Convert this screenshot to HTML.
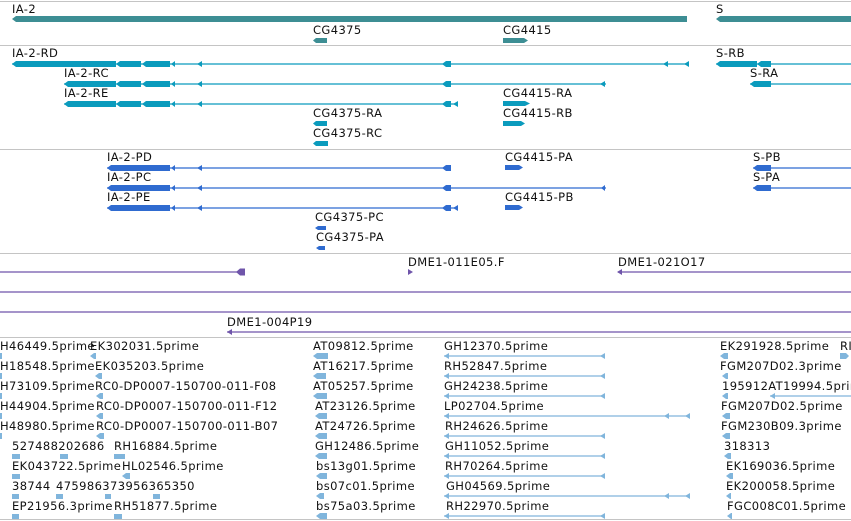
<!DOCTYPE html>
<html><head><meta charset="utf-8"><style>
html,body{margin:0;padding:0;background:#fff;width:851px;height:521px;overflow:hidden}
svg text{font-family:"DejaVu Sans","Liberation Sans",sans-serif;font-size:11.5px;fill:#111;letter-spacing:0.4px}
</style></head><body>
<svg width="851" height="521" xmlns="http://www.w3.org/2000/svg">
<g stroke="#c4c4c4" stroke-width="1">
<line x1="0" y1="1.5" x2="851" y2="1.5"/><line x1="0" y1="45.5" x2="851" y2="45.5"/>
<line x1="0" y1="149.5" x2="851" y2="149.5"/><line x1="0" y1="253.5" x2="851" y2="253.5"/>
<line x1="0" y1="337.5" x2="851" y2="337.5"/><line x1="0" y1="519.5" x2="851" y2="519.5"/>
</g>

<!-- track 1 genes -->
<g fill="#3d8e94">
<path d="M12 19 L16 16 L687 16 L687 22 L16 22 Z"/>
<path d="M716 19 L720 16 L851 16 L851 22 L720 22 Z"/>
<path d="M313 40.5 L316 38 L327 38 L327 43 L316 43 Z"/>
<path d="M503 38 L524 38 L528 40.5 L524 43 L503 43 Z"/>
</g>
<text x="12" y="13">IA-2</text><text x="716" y="13">S</text>
<text x="313" y="34">CG4375</text><text x="503" y="34">CG4415</text>

<!-- track 2 transcripts (cyan) -->
<g stroke="#0b9bbd" stroke-width="1.3"><line x1="12" y1="64" x2="688" y2="64"/><line x1="64" y1="84" x2="606" y2="84"/><line x1="64" y1="104" x2="458" y2="104"/><line x1="716" y1="64" x2="851" y2="64"/><line x1="750" y1="84" x2="851" y2="84"/></g>
<g fill="#0b9bbd">
<path d="M12 64 L16 61 L116 61 L116 67 L16 67 Z"/><path d="M116 64 L120 61 L141 61 L141 67 L120 67 Z"/><path d="M142 64 L146 61 L170 61 L170 67 L146 67 Z"/><path d="M171 64 L175 61 L175 67Z"/><path d="M197 64 L202 61 L202 67Z"/><path d="M442 64 L446 61 L451 61 L451 67 L446 67Z"/><path d="M663 64 L668 61 L668 67Z"/><path d="M684 64 L689 61 L689 67Z"/>
<path d="M64 84 L68 81 L116 81 L116 87 L68 87 Z"/><path d="M116 84 L120 81 L141 81 L141 87 L120 87 Z"/><path d="M142 84 L146 81 L170 81 L170 87 L146 87 Z"/><path d="M171 84 L175 81 L175 87Z"/><path d="M197 84 L202 81 L202 87Z"/><path d="M442 84 L446 81 L451 81 L451 87 L446 87Z"/><path d="M600 84 L605 81 L605 87Z"/>
<path d="M64 104 L68 101 L116 101 L116 107 L68 107 Z"/><path d="M116 104 L120 101 L141 101 L141 107 L120 107 Z"/><path d="M142 104 L146 101 L170 101 L170 107 L146 107 Z"/><path d="M171 104 L175 101 L175 107Z"/><path d="M197 104 L202 101 L202 107Z"/><path d="M442 104 L446 101 L451 101 L451 107 L446 107Z"/><path d="M453 104 L458 101 L458 107Z"/>
<path d="M716 64 L720 61 L757 61 L757 67 L720 67Z"/><path d="M757 64 L761 61 L771 61 L771 67 L761 67Z"/>
<path d="M750 84 L754 81 L771 81 L771 87 L754 87Z"/>
<path d="M503 101 L525 101 L530 103.5 L525 106 L503 106Z"/>
<path d="M503 121 L521 121 L525 123.5 L521 126 L503 126Z"/>
<path d="M313 123.5 L316 121 L327 121 L327 126 L316 126Z"/>
<path d="M313 143.5 L316 141 L328 141 L328 146 L316 146Z"/>
</g>
<text x="12" y="57">IA-2-RD</text><text x="64" y="77">IA-2-RC</text><text x="64" y="97">IA-2-RE</text>
<text x="716" y="57">S-RB</text><text x="750" y="77">S-RA</text>
<text x="503" y="97">CG4415-RA</text><text x="503" y="117">CG4415-RB</text>
<text x="313" y="117">CG4375-RA</text><text x="313" y="137">CG4375-RC</text>

<!-- track 3 (blue) -->
<g stroke="#2f6bd0" stroke-width="1.3"><line x1="107" y1="168" x2="451" y2="168"/><line x1="107" y1="188" x2="606" y2="188"/><line x1="107" y1="208" x2="458" y2="208"/><line x1="753" y1="168" x2="851" y2="168"/><line x1="753" y1="188" x2="851" y2="188"/></g>
<g fill="#2f6bd0">
<path d="M107 168 L111 165 L170 165 L170 171 L111 171Z"/><path d="M171 168 L175 165 L175 171Z"/><path d="M197 168 L202 165 L202 171Z"/><path d="M442 168 L446 165 L451 165 L451 171 L446 171Z"/>
<path d="M107 188 L111 185 L170 185 L170 191 L111 191Z"/><path d="M171 188 L175 185 L175 191Z"/><path d="M197 188 L202 185 L202 191Z"/><path d="M442 188 L446 185 L451 185 L451 191 L446 191Z"/><path d="M601 188 L605 185 L605 191Z"/>
<path d="M107 208 L111 205 L170 205 L170 211 L111 211Z"/><path d="M171 208 L175 205 L175 211Z"/><path d="M197 208 L202 205 L202 211Z"/><path d="M442 208 L446 205 L451 205 L451 211 L446 211Z"/><path d="M453 208 L458 205 L458 211Z"/>
<path d="M753 168 L757 165 L771 165 L771 171 L757 171Z"/><path d="M753 188 L757 185 L771 185 L771 191 L757 191Z"/>
<path d="M505 165 L519 165 L523 167.5 L519 170 L505 170Z"/><path d="M505 205 L519 205 L523 207.5 L519 210 L505 210Z"/>
<path d="M315 228 L318 226 L326 226 L326 230 L318 230Z"/><path d="M316 248 L319 246 L325 246 L325 250 L319 250Z"/>
</g>
<text x="107" y="161">IA-2-PD</text><text x="107" y="181">IA-2-PC</text><text x="107" y="201">IA-2-PE</text>
<text x="505" y="161">CG4415-PA</text><text x="505" y="201">CG4415-PB</text>
<text x="315" y="221">CG4375-PC</text><text x="316" y="241">CG4375-PA</text>
<text x="753" y="161">S-PB</text><text x="753" y="181">S-PA</text>

<!-- track 4 purple -->
<g stroke="#6f55aa" stroke-width="1.3"><line x1="0" y1="272" x2="245" y2="272"/><line x1="618" y1="272" x2="851" y2="272"/><line x1="0" y1="292" x2="851" y2="292"/><line x1="0" y1="312" x2="851" y2="312"/><line x1="227" y1="332" x2="851" y2="332"/></g>
<g fill="#6f55aa"><path d="M236 272 L240 268.5 L245 268.5 L245 275.5 L240 275.5Z"/><path d="M408 269 L413 272 L408 275Z"/><path d="M617 272 L622 269 L622 275Z"/><path d="M227 332 L232 329 L232 335Z"/></g>
<text x="408" y="266">DME1-011E05.F</text><text x="618" y="266">DME1-021O17</text><text x="227" y="326">DME1-004P19</text>

<!-- track 5 ESTs -->
<g stroke="#80b5dc" stroke-width="1.3">
<line x1="444" y1="356" x2="605" y2="356"/><line x1="444" y1="376" x2="605" y2="376"/><line x1="444" y1="396" x2="605" y2="396"/><line x1="444" y1="416" x2="690" y2="416"/><line x1="444" y1="436" x2="605" y2="436"/><line x1="444" y1="456" x2="605" y2="456"/><line x1="444" y1="476" x2="605" y2="476"/><line x1="444" y1="496" x2="690" y2="496"/><line x1="444" y1="516" x2="605" y2="516"/>
<line x1="770" y1="396" x2="851" y2="396"/>
</g>
<g fill="#80b5dc">
<path d="M600 356 L605 353 L605 359Z"/><path d="M600 376 L605 373 L605 379Z"/><path d="M600 396 L605 393 L605 399Z"/><path d="M664 416 L669 413 L669 419Z"/><path d="M685 416 L690 413 L690 419Z"/><path d="M600 436 L605 433 L605 439Z"/><path d="M600 456 L605 453 L605 459Z"/><path d="M600 476 L605 473 L605 479Z"/><path d="M664 496 L669 493 L669 499Z"/><path d="M685 496 L690 493 L690 499Z"/><path d="M600 516 L605 513 L605 519Z"/>
<path d="M444 356 L449 353 L449 359Z"/><path d="M444 376 L449 373 L449 379Z"/><path d="M444 396 L449 393 L449 399Z"/><path d="M444 416 L449 413 L449 419Z"/><path d="M444 436 L449 433 L449 439Z"/><path d="M444 456 L449 453 L449 459Z"/><path d="M444 476 L449 473 L449 479Z"/><path d="M444 496 L449 493 L449 499Z"/><path d="M444 516 L449 513 L449 519Z"/>
<rect x="0" y="353" width="2" height="6"/><rect x="0" y="373" width="2" height="6"/><rect x="0" y="393" width="2" height="6"/><rect x="0" y="413" width="2" height="6"/><rect x="0" y="433" width="2" height="6"/>
<path d="M90 356 L94 353 L96 353 L96 359 L94 359Z"/><path d="M95 376 L99 373 L102 373 L102 379 L99 379Z"/><path d="M96 396 L100 393 L103 393 L103 399 L100 399Z"/><path d="M96 416 L100 413 L103 413 L103 419 L100 419Z"/><path d="M96 436 L100 433 L104 433 L104 439 L100 439Z"/>
<rect x="12" y="454" width="8" height="5"/><rect x="60" y="454" width="8" height="5"/><rect x="114" y="454" width="11" height="5"/>
<rect x="12" y="474" width="8" height="5"/><path d="M122 476 L126 473 L130 473 L130 479 L126 479Z"/>
<rect x="12" y="494" width="7" height="5"/><rect x="56" y="494" width="7" height="5"/><rect x="105" y="494" width="6" height="5"/><rect x="153" y="494" width="7" height="5"/>
<rect x="12" y="514" width="7" height="5"/><rect x="114" y="514" width="8" height="5"/>
<path d="M313 356 L317 353 L328 353 L328 359 L317 359Z"/><path d="M313 376 L317 373 L326 373 L326 379 L317 379Z"/><path d="M313 396 L317 393 L327 393 L327 399 L317 399Z"/><path d="M315 416 L319 413 L327 413 L327 419 L319 419Z"/><path d="M315 436 L319 433 L327 433 L327 439 L319 439Z"/><path d="M315 456 L319 453 L327 453 L327 459 L319 459Z"/><path d="M316 476 L320 473 L327 473 L327 479 L320 479Z"/><path d="M316 496 L320 493 L324 493 L324 499 L320 499Z"/><path d="M316 516 L320 513 L327 513 L327 519 L320 519Z"/>
<path d="M720 356 L724 353 L728 353 L728 359 L724 359Z"/><path d="M722 376 L726 373 L728 373 L728 379 L726 379Z"/><path d="M722 396 L726 393 L728 393 L728 399 L726 399Z"/><path d="M770 396 L775 393 L775 399Z"/><path d="M722 416 L726 413 L730 413 L730 419 L726 419Z"/><path d="M722 436 L726 433 L730 433 L730 439 L726 439Z"/><path d="M724 456 L728 453 L731 453 L731 459 L728 459Z"/><path d="M726 476 L730 473 L733 473 L733 479 L730 479Z"/><path d="M726 496 L730 493 L731 493 L731 499 L730 499Z"/><path d="M727 516 L731 513 L732 513 L732 519 L731 519Z"/>
<path d="M840 353 L846 353 L849 356 L846 359 L840 359Z"/>
</g>
<g>
<text x="0" y="350">H46449.5prime</text><text x="0" y="370">H18548.5prime</text><text x="0" y="390">H73109.5prime</text><text x="0" y="410">H44904.5prime</text><text x="0" y="430">H48980.5prime</text>
<text x="90" y="350">EK302031.5prime</text><text x="95" y="370">EK035203.5prime</text><text x="95" y="390">RC0-DP0007-150700-011-F08</text><text x="96" y="410">RC0-DP0007-150700-011-F12</text><text x="96" y="430">RC0-DP0007-150700-011-B07</text>
<text x="12" y="450">527488202686</text><text x="114" y="450">RH16884.5prime</text>
<text x="12" y="470">EK043722.5prime</text><text x="122" y="470">HL02546.5prime</text>
<text x="12" y="490">38744</text><text x="56" y="490">475986373956365350</text>
<text x="12" y="510">EP21956.3prime</text><text x="114" y="510">RH51877.5prime</text>
<text x="313" y="350">AT09812.5prime</text><text x="313" y="370">AT16217.5prime</text><text x="313" y="390">AT05257.5prime</text><text x="315" y="410">AT23126.5prime</text><text x="315" y="430">AT24726.5prime</text><text x="315" y="450">GH12486.5prime</text><text x="316" y="470">bs13g01.5prime</text><text x="316" y="490">bs07c01.5prime</text><text x="316" y="510">bs75a03.5prime</text>
<text x="444" y="350">GH12370.5prime</text><text x="444" y="370">RH52847.5prime</text><text x="444" y="390">GH24238.5prime</text><text x="444" y="410">LP02704.5prime</text><text x="445" y="430">RH24626.5prime</text><text x="445" y="450">GH11052.5prime</text><text x="445" y="470">RH70264.5prime</text><text x="446" y="490">GH04569.5prime</text><text x="446" y="510">RH22970.5prime</text>
<text x="720" y="350">EK291928.5prime</text><text x="720" y="370">FGM207D02.3prime</text><text x="722" y="390">195912AT19994.5prime</text><text x="721" y="410">FGM207D02.5prime</text><text x="721" y="430">FGM230B09.3prime</text><text x="724" y="450">318313</text><text x="726" y="470">EK169036.5prime</text><text x="726" y="490">EK200058.5prime</text><text x="727" y="510">FGC008C01.5prime</text>
<text x="840" y="350">RI</text>
</g>
</svg>
</body></html>
